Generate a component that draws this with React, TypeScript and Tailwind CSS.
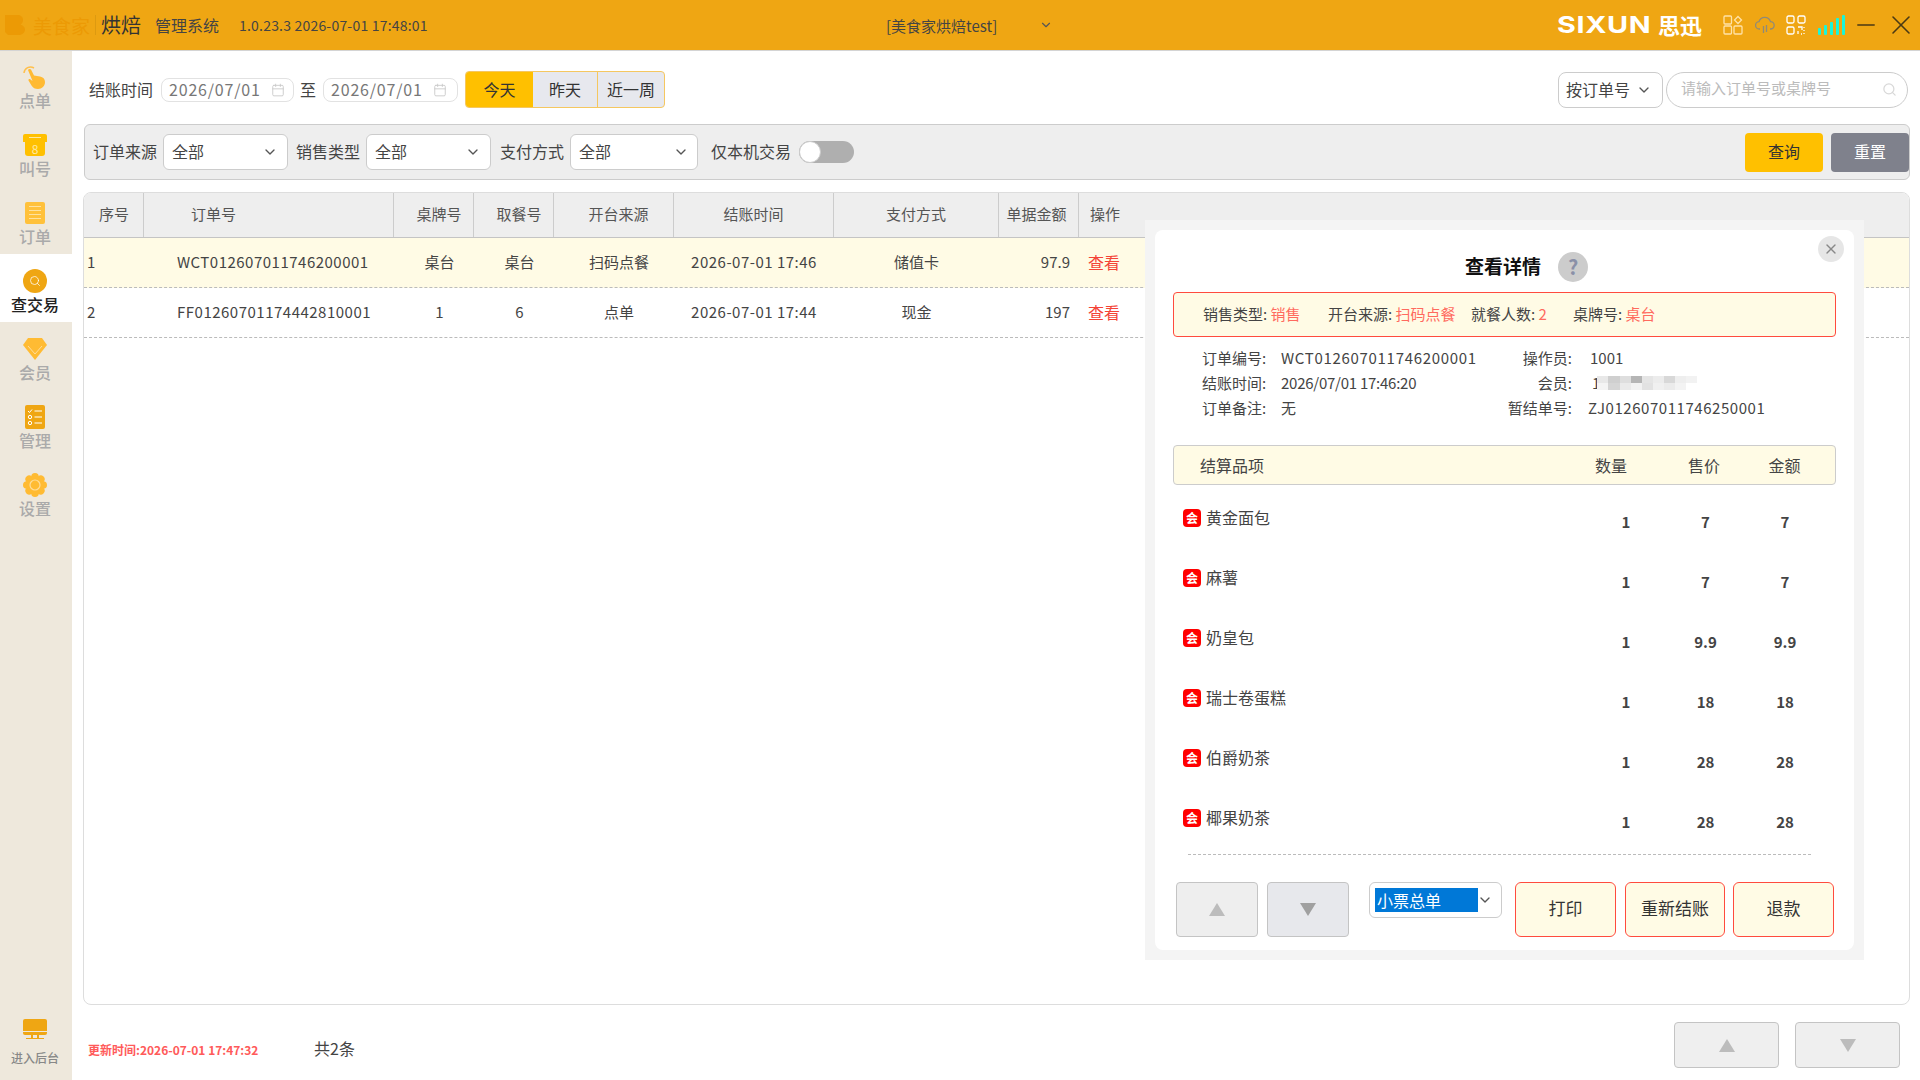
import { ChevronDown, Search, X, Calendar, Minus } from "lucide-react";

const orders = [
  { no: "1", id: "WCT012607011746200001", table: "桌台", pick: "桌台", source: "扫码点餐", time: "2026-07-01 17:46", pay: "储值卡", amount: "97.9", active: true },
  { no: "2", id: "FF01260701174442810001", table: "1", pick: "6", source: "点单", time: "2026-07-01 17:44", pay: "现金", amount: "197", active: false },
];

const items = [
  { name: "黄金面包", qty: "1", price: "7", total: "7" },
  { name: "麻薯", qty: "1", price: "7", total: "7" },
  { name: "奶皇包", qty: "1", price: "9.9", total: "9.9" },
  { name: "瑞士卷蛋糕", qty: "1", price: "18", total: "18" },
  { name: "伯爵奶茶", qty: "1", price: "28", total: "28" },
  { name: "椰果奶茶", qty: "1", price: "28", total: "28" },
];

const mosaic = ["#e8e8e8", "#cfcfcf", "#dedede", "#b5b5b5", "#e5e5e5", "#ececec", "#d8d8d8", "#eeeeee", "#f2f2f2", "#f4f4f4", "#d5d5d5", "#eaeaea", "#f2f2f2", "#e2e2e2", "#f0f0f0", "#ebebeb", "#f3f3f3", "#ffffff"];

const tableCols = "grid grid-cols-[60px_250px_80px_80px_120px_160px_165px_80px_1fr]";

function HandIcon() {
  return (
    <svg width="26" height="26" viewBox="0 0 26 26">
      <path d="M2 9a6.500 6.500 0 0 1 10-5" fill="none" stroke="#ffc04d" strokeWidth="1.500" />
      <path d="M6 6c1-1.500 3-1 3.500.5l2.500 5 6 1c3 .5 5 2.500 5 5.500 0 4-3 7-7 7-3 0-5-1-6.500-3.500l-3-5c-.5-1 1-2 2-1l2 1.500z" fill="#ffba33" />
    </svg>
  );
}

function CallIcon() {
  return (
    <div className="relative flex h-[22px] w-[24px] flex-col items-center">
      <div className="h-[8px] w-[24px] rounded-t-[2px] bg-[#ffc000]" />
      <div className="flex h-[14px] w-[20px] items-center justify-center rounded-b-[3px] bg-[#ffc000] text-[12px] leading-none text-[#ffe9a0]">8</div>
      <div className="absolute left-[6px] top-[3px] h-px w-[12px] bg-[#ffe9a0]" />
    </div>
  );
}

function OrderIcon() {
  return (
    <div className="flex h-[22px] w-[20px] flex-col items-center justify-center gap-[3px] rounded-[2px] bg-[#ffc13b]">
      <div className="h-px w-[12px] bg-[#ffe2a0]" />
      <div className="h-px w-[12px] bg-[#ffe2a0]" />
      <div className="h-px w-[12px] bg-[#ffe2a0]" />
      <div className="h-px w-[12px] bg-[#ffe2a0]" />
    </div>
  );
}

function SearchCircle() {
  return (
    <div className="flex h-[24px] w-[24px] items-center justify-center rounded-full bg-[#efa613]">
      <Search size={12} color="#ffffff" strokeWidth={1.500} />
    </div>
  );
}

function GemIcon() {
  return (
    <svg width="24" height="22" viewBox="0 0 24 22">
      <path d="M5 0h14l5 7-12 15L0 7z" fill="#ffbb33" />
      <path d="M5 8l7 8 7-8" fill="none" stroke="#ffdd99" strokeWidth="1" />
    </svg>
  );
}

function ManageIcon() {
  return (
    <svg width="20" height="24" viewBox="0 0 20 24">
      <rect width="20" height="24" rx="2" fill="#efa613" />
      <path d="M3 6l1.500 1.500L7 4.500" fill="none" stroke="#fff" strokeWidth="1" />
      <circle cx="5" cy="12" r="1.700" fill="none" stroke="#fff" strokeWidth="1" />
      <circle cx="5" cy="18" r="1.700" fill="none" stroke="#fff" strokeWidth="1" />
      <path d="M9.500 6H17M9.500 12H17M9.500 18H17" stroke="#fff" strokeWidth="1.200" />
    </svg>
  );
}

function GearIcon() {
  const teeth = [0, 45, 90, 135, 180, 225, 270, 315];
  return (
    <svg width="24" height="24" viewBox="0 0 24 24">
      {teeth.map((a) => (
        <circle key={a} cx="12" cy="3.800" r="3.800" fill="#ffbb33" transform={`rotate(${a} 12 12)`} />
      ))}
      <circle cx="12" cy="12" r="9" fill="#ffbb33" />
      <circle cx="12" cy="12" r="5" fill="none" stroke="#ffdd99" strokeWidth="1.200" />
    </svg>
  );
}

function MonitorIcon() {
  return (
    <svg width="24" height="20" viewBox="0 0 24 20">
      <path d="M2 0h20a2 2 0 0 1 2 2v10H0V2a2 2 0 0 1 2-2z" fill="#efa613" />
      <path d="M0 13h24v1a2 2 0 0 1-2 2H2a2 2 0 0 1-2-2z" fill="#efa613" />
      <path d="M9 16v3M15 16v3" stroke="#efa613" strokeWidth="2" />
      <path d="M3 19.500h18" stroke="#efa613" strokeWidth="1" />
    </svg>
  );
}

const nav = [
  { label: "点单", icon: <HandIcon /> },
  { label: "叫号", icon: <CallIcon /> },
  { label: "订单", icon: <OrderIcon /> },
  { label: "查交易", icon: <SearchCircle />, active: true },
  { label: "会员", icon: <GemIcon /> },
  { label: "管理", icon: <ManageIcon /> },
  { label: "设置", icon: <GearIcon /> },
];

function Triangle({ up, color }: { up?: boolean; color: string }) {
  return (
    <svg width="16" height="13" viewBox="0 0 16 13">
      <path d={up ? "M8 0l8 13H0z" : "M0 0h16L8 13z"} fill={color} />
    </svg>
  );
}

function DateInput({ value, className }: { value: string; className: string }) {
  return (
    <div className={`flex h-[24px] items-center rounded-[8px] border border-[#e2e2e2] bg-white pl-[7px] ${className}`}>
      <span className="pb-[2px] text-[16px] tracking-[0.8px] text-[#777]">{value}</span>
      <Calendar size={14} color="#c8c8c8" strokeWidth={1.500} className="ml-[10px]" />
    </div>
  );
}

function FilterSelect({ label, className, chevronClass }: { label: string; className: string; chevronClass: string }) {
  return (
    <>
      <span className="pb-[2px] text-[16px] text-[#444]">{label}</span>
      <div className={`ml-[6px] flex h-[36px] items-center justify-between rounded-[6px] border border-[#cccccc] bg-white pl-[8px] ${chevronClass} ${className}`}>
        <span className="pb-[2px] text-[16px] text-[#444]">全部</span>
        <ChevronDown size={16} color="#555" />
      </div>
    </>
  );
}

function DetailModal() {
  return (
    <div className="absolute left-[1145px] top-[220px] h-[740px] w-[719px] bg-[#f4f4f4] p-[10px]">
      <div className="relative flex h-full flex-col rounded-[8px] bg-white px-[18px] pt-[22px]">
        <div className="absolute left-[663px] top-[6px] flex h-[26px] w-[26px] items-center justify-center rounded-full bg-[#e6e6e6]">
          <X size={16} color="#888" />
        </div>
        <div className="flex h-[30px] items-center pl-[292px]">
          <span className="pb-[3px] text-[19px] font-bold leading-none text-[#111]">查看详情</span>
          <span className="ml-[17px] flex h-[30px] w-[30px] items-center justify-center rounded-full bg-[#cccccc] text-[20px] font-bold text-[#8a90a8]">?</span>
        </div>
        <div className="mt-[10px] flex h-[45px] items-center rounded-[4px] border border-[#ff4b3e] bg-[#fffbe5] pl-[29px] text-[15px] text-[#444]">
          <span className="w-[125px]">销售类型: <span className="text-[#ff6a5e]">销售</span></span>
          <span className="w-[143px]">开台来源: <span className="text-[#ff6a5e]">扫码点餐</span></span>
          <span className="w-[102px]">就餐人数: <span className="text-[#ff6a5e]">2</span></span>
          <span>桌牌号: <span className="text-[#ff6a5e]">桌台</span></span>
        </div>
        <div className="mt-[10px] grid grid-cols-[79px_219px_72px_1fr] grid-rows-[22px_22px_22px] gap-y-[3px] pl-[29px] text-[15px] leading-[22px] text-[#444]">
          <span>订单编号:</span>
          <span className="tracking-[0.7px]">WCT012607011746200001</span>
          <span className="text-right">操作员:</span>
          <span className="pl-[18px]">1001</span>
          <span>结账时间:</span>
          <span className="tracking-[-0.25px]">2026/07/01 17:46:20</span>
          <span className="text-right">会员:</span>
          <div className="flex items-center pl-[20px]">
            <span>1</span>
            <div className="ml-[-3px] grid h-[14px] w-[100px] grid-cols-9">
              {mosaic.map((c, i) => (
                <div key={i} style={{ backgroundColor: c }} />
              ))}
            </div>
          </div>
          <span>订单备注:</span>
          <span>无</span>
          <span className="text-right">暂结单号:</span>
          <span className="pl-[16px] tracking-[0.55px]">ZJ012607011746250001</span>
        </div>
        <div className="mt-[26px] grid h-[40px] grid-cols-[397px_80px_106px_55px_1fr] items-center rounded-[4px] border border-[#cccccc] bg-[#fffbe5] text-[16px] text-[#444]">
          <span className="pl-[26px]">结算品项</span>
          <span className="text-center">数量</span>
          <span className="text-center">售价</span>
          <span className="text-center">金额</span>
        </div>
        <div className="mt-[2px] flex flex-col">
          {items.map((item) => (
            <div key={item.name} className="grid h-[60px] grid-cols-[413px_80px_79px_80px_1fr] items-center text-[#444]">
              <div className="flex items-center pl-[10px]">
                <span className="mt-[2px] flex h-[18px] w-[18px] items-center justify-center rounded-[4px] bg-[#ff0000] text-[12px] font-bold leading-none text-white">会</span>
                <span className="ml-[5px] text-[16px] leading-[18px]">{item.name}</span>
              </div>
              <span className="pt-[10px] text-center text-[15px] font-bold">{item.qty}</span>
              <span className="pt-[10px] text-center text-[15px] font-bold">{item.price}</span>
              <span className="pt-[10px] text-center text-[15px] font-bold">{item.total}</span>
            </div>
          ))}
        </div>
        <div className="ml-[15px] mr-[25px] mt-[7px] border-t border-dashed border-[#bbbbbb]" />
        <div className="mt-[27px] flex items-start pl-[3px]">
          <div className="flex h-[55px] w-[82px] items-center justify-center rounded-[4px] border border-[#c4c4c4] bg-[#eeeeee]">
            <Triangle up color="#bcbcbc" />
          </div>
          <div className="ml-[9px] flex h-[55px] w-[82px] items-center justify-center rounded-[4px] border border-[#c4c4c4] bg-[#e7e8ec]">
            <Triangle color="#a0a0a0" />
          </div>
          <div className="ml-[20px] flex h-[36px] w-[133px] items-center rounded-[6px] border border-[#cccccc] bg-white pl-[5px]">
            <span className="flex h-[24px] w-[103px] items-center bg-[#0078d7] pl-[2px] text-[16px] text-white">小票总单</span>
            <ChevronDown size={16} color="#555" className="ml-[-1px]" />
          </div>
          <div className="ml-[13px] flex h-[55px] w-[101px] items-center justify-center rounded-[6px] border border-[#ff4b3e] bg-[#fffbe5] pb-[3px] text-[17px] text-[#333]">打印</div>
          <div className="ml-[9px] flex h-[55px] w-[100px] items-center justify-center rounded-[6px] border border-[#ff4b3e] bg-[#fffbe5] pb-[3px] text-[17px] text-[#333]">重新结账</div>
          <div className="ml-[8px] flex h-[55px] w-[101px] items-center justify-center rounded-[6px] border border-[#ff4b3e] bg-[#fffbe5] pb-[3px] text-[17px] text-[#333]">退款</div>
        </div>
      </div>
    </div>
  );
}

export default function App() {
  return (
    <div className="relative flex h-[1080px] w-[1920px] flex-col overflow-hidden bg-white font-['Noto_Sans_CJK_SC','Liberation_Sans',sans-serif]">
      <header className="relative z-10 flex h-[50px] shrink-0 items-center bg-[#efa613] shadow-[0_1px_0_#d4d4d4]">
        <svg width="20" height="20" viewBox="0 0 20 20" className="ml-[5px]">
          <path d="M0 0h12c4 0 6 2 6 5 0 2-1 3.500-2.500 4.500C18 10.500 20 12 20 14.500 20 18 17 20 13 20H3l-3-3z" fill="#ec9a05" />
        </svg>
        <span className="ml-[8px] text-[19px] leading-none text-[#ec9a05]">美食家</span>
        <div className="ml-[5px] h-[20px] w-px bg-[#dd9a10]" />
        <span className="ml-[5px] text-[20px] leading-none text-[#333]">烘焙</span>
        <span className="ml-[14px] text-[16px] leading-none text-[#444]">管理系统</span>
        <span className="ml-[20px] w-[647px] text-[14px] leading-none tracking-[0.2px] text-[#444]">1.0.23.3 2026-07-01 17:48:01</span>
        <span className="w-[153px] text-[15px] leading-none text-[#444]">[美食家烘焙test]</span>
        <ChevronDown size={14} color="#555" />
        <div className="ml-[504px] w-[91px]">
          <span className="block origin-left scale-x-[1.25] font-['Inter',sans-serif] text-[23px] font-bold leading-none tracking-[0.5px] text-white">SIXUN</span>
        </div>
        <span className="ml-[10px] w-[45px] pb-[3px] text-[22px] font-bold leading-none text-white">思迅</span>
        <svg width="20" height="20" viewBox="0 0 20 20" className="ml-[20px]" fill="none" stroke="#ffe2a8" strokeWidth="1.300">
          <rect x="1" y="1" width="7.500" height="8" rx="1" />
          <path d="M15 1.500l3.500 3.500L15 8.500 11.500 5z" />
          <rect x="1" y="11" width="7.500" height="8" rx="1" />
          <rect x="11" y="11" width="8" height="8" rx="1" />
        </svg>
        <svg width="20" height="18" viewBox="0 0 20 18" className="ml-[12px]" fill="none" stroke="#8f8a78" strokeWidth="1.300">
          <path d="M5 13H4.500a3.700 3.700 0 0 1-.5-7.400 6 6 0 0 1 11.500 0A3.700 3.700 0 0 1 15.500 13H15" />
          <path d="M8.500 10v7M11.500 9v7" />
        </svg>
        <svg width="20" height="20" viewBox="0 0 20 20" className="ml-[11px]" fill="none" stroke="#ffffff" strokeWidth="1.300">
          <rect x="1" y="1" width="7" height="7" rx="1.500" />
          <rect x="12" y="1" width="7" height="7" rx="1.500" />
          <rect x="1" y="12" width="7" height="7" rx="1.500" />
          <path d="M12 12h4v3M12 16v3M15 19h1M18 12v1M18 15v1M18 18v1" />
        </svg>
        <svg width="27" height="20" viewBox="0 0 27 20" className="ml-[12px]" fill="#19f5d8">
          <rect x="0" y="13" width="3" height="7" rx="1" />
          <rect x="6" y="10" width="3" height="10" rx="1" />
          <rect x="12" y="7" width="3" height="13" rx="1" />
          <rect x="18" y="3" width="3" height="17" rx="1" />
          <rect x="24" y="0" width="3" height="20" rx="1" />
        </svg>
        <Minus size={28} color="#4b3a14" className="ml-[7px]" strokeWidth={1.300} />
        <X size={32} color="#4b3a14" className="ml-[5px]" strokeWidth={1.200} />
      </header>
      <div className="flex min-h-0 flex-1">
        <aside className="flex w-[72px] shrink-0 flex-col bg-[#eee8dc]">
          {nav.map((n) => (
            <div
              key={n.label}
              className={`flex h-[68px] flex-col items-center pr-[2px] pt-[14px] ${n.active ? "bg-white" : ""}`}
            >
              <div className="flex h-[25px] items-center justify-center">{n.icon}</div>
              <span className={`text-[16px] font-medium leading-[22px] ${n.active ? "font-bold text-[#222]" : "text-[#aaaaaa]"}`}>{n.label}</span>
            </div>
          ))}
          <div className="mt-auto flex flex-col items-center pb-[16px] pr-[2px]">
            <MonitorIcon />
            <span className="mt-[13px] text-[12px] font-medium leading-none text-[#888]">进入后台</span>
          </div>
        </aside>
        <main className="flex min-w-0 flex-1 flex-col">
          <div className="mt-[21px] flex h-[37px] items-center pl-[17px] pr-[12px]">
            <span className="pb-[2px] text-[16px] text-[#444]">结账时间</span>
            <DateInput value="2026/07/01" className="ml-[8px] w-[133px]" />
            <span className="ml-[6px] pb-[2px] text-[16px] text-[#444]">至</span>
            <DateInput value="2026/07/01" className="ml-[7px] w-[135px]" />
            <div className="ml-[7px] flex h-[37px] w-[200px] overflow-hidden rounded-[4px] border border-[#f5c760] bg-[#e7e8ee] pb-0 text-[16px] text-[#333]">
              <span className="flex w-[67px] items-center justify-center bg-[#ffc000] pb-[2px]">今天</span>
              <span className="flex w-[65px] items-center justify-center border-r border-[#f5c760] pb-[2px]">昨天</span>
              <span className="flex flex-1 items-center justify-center pb-[2px]">近一周</span>
            </div>
            <div className="ml-auto flex h-[36px] w-[105px] items-center justify-between rounded-[8px] border border-[#cccccc] pl-[7px] pr-[10px]">
              <span className="pb-[2px] text-[16px] text-[#444]">按订单号</span>
              <ChevronDown size={16} color="#555" />
            </div>
            <div className="ml-[3px] flex h-[36px] w-[242px] items-center justify-between rounded-[18px] border border-[#cccccc] pl-[14px] pr-[10px]">
              <span className="pb-[2px] text-[15px] text-[#bbbbbb]">请输入订单号或桌牌号</span>
              <Search size={15} color="#d8d8d8" />
            </div>
          </div>
          <div className="ml-[12px] mr-[10px] mt-[16px] flex h-[56px] shrink-0 items-center rounded-[6px] border border-[#cccccc] bg-[#eeeeee] pl-[8px]">
            <FilterSelect label="订单来源" className="w-[125px]" chevronClass="pr-[9px]" />
            <div className="w-[8px]" />
            <FilterSelect label="销售类型" className="w-[125px]" chevronClass="pr-[9px]" />
            <div className="w-[9px]" />
            <FilterSelect label="支付方式" className="w-[128px]" chevronClass="pr-[8px]" />
            <span className="ml-[13px] pb-[2px] text-[16px] text-[#444]">仅本机交易</span>
            <div className="ml-[8px] flex h-[22px] w-[55px] items-center rounded-full bg-[#afafaf]">
              <div className="h-[22px] w-[22px] rounded-full border border-[#cccccc] bg-white" />
            </div>
            <div className="ml-auto flex h-[39px] w-[78px] items-center justify-center rounded-[4px] bg-[#ffc000] pb-[2px] text-[16px] text-[#333]">查询</div>
            <div className="ml-[8px] flex h-[39px] w-[78px] items-center justify-center rounded-[4px] bg-[#7f818c] pb-[2px] text-[16px] text-white">重置</div>
          </div>
          <div className="ml-[11px] mr-[10px] mt-[12px] h-[813px] shrink-0 overflow-hidden rounded-[8px] border border-[#dddddd]">
            <div className={`${tableCols} h-[45px] border-b border-[#c4c4c4] bg-[#eeeeee] text-[15px] text-[#555]`}>
              <span className="flex items-center border-r border-[#cccccc] pb-[2px] pl-[15px]">序号</span>
              <span className="flex items-center border-r border-[#cccccc] pb-[2px] pl-[47px]">订单号</span>
              <span className="flex items-center justify-center border-r border-[#cccccc] pb-[2px] pl-[11px]">桌牌号</span>
              <span className="flex items-center justify-center border-r border-[#cccccc] pb-[2px] pl-[11px]">取餐号</span>
              <span className="flex items-center justify-center border-r border-[#cccccc] pb-[2px] pl-[10px]">开台来源</span>
              <span className="flex items-center justify-center border-r border-[#cccccc] pb-[2px]">结账时间</span>
              <span className="flex items-center justify-center border-r border-[#cccccc] pb-[2px]">支付方式</span>
              <span className="flex items-center justify-center border-r border-[#cccccc] pb-[2px] pr-[4px]">单据金额</span>
              <span className="flex items-center pb-[2px] pl-[11px]">操作</span>
            </div>
            {orders.map((o) => (
              <div
                key={o.no}
                className={`${tableCols} h-[50px] items-center border-b border-dashed border-[#bbbbbb] text-[15px] text-[#444] ${o.active ? "bg-[#fffbe5]" : ""}`}
              >
                <span className="pl-[3px]">{o.no}</span>
                <span className="pl-[33px] tracking-[0.5px]">{o.id}</span>
                <span className="pl-[11px] text-center">{o.table}</span>
                <span className="pl-[11px] text-center">{o.pick}</span>
                <span className="pl-[10px] text-center">{o.source}</span>
                <span className="text-center tracking-[0.5px]">{o.time}</span>
                <span className="text-center">{o.pay}</span>
                <span className="pr-[9px] text-right">{o.amount}</span>
                <span className="pb-[2px] pl-[9px] text-[16px] text-[#f44336]">查看</span>
              </div>
            ))}
          </div>
          <div className="mt-[17px] flex items-start pl-[16px] pr-[20px]">
            <span className="mt-[18px] w-[226px] text-[12px] font-bold leading-[20px] text-[#ff5a5a]">更新时间:2026-07-01 17:47:32</span>
            <span className="mt-[16px] text-[16px] leading-[20px] text-[#444]">共2条</span>
            <div className="ml-auto flex h-[46px] w-[105px] items-center justify-center rounded-[4px] border border-[#c4c4c4] bg-[#efefef]">
              <Triangle up color="#bcbcbc" />
            </div>
            <div className="ml-[16px] flex h-[46px] w-[105px] items-center justify-center rounded-[4px] border border-[#c4c4c4] bg-[#efefef]">
              <Triangle color="#bcbcbc" />
            </div>
          </div>
        </main>
      </div>
      <DetailModal />
    </div>
  );
}
